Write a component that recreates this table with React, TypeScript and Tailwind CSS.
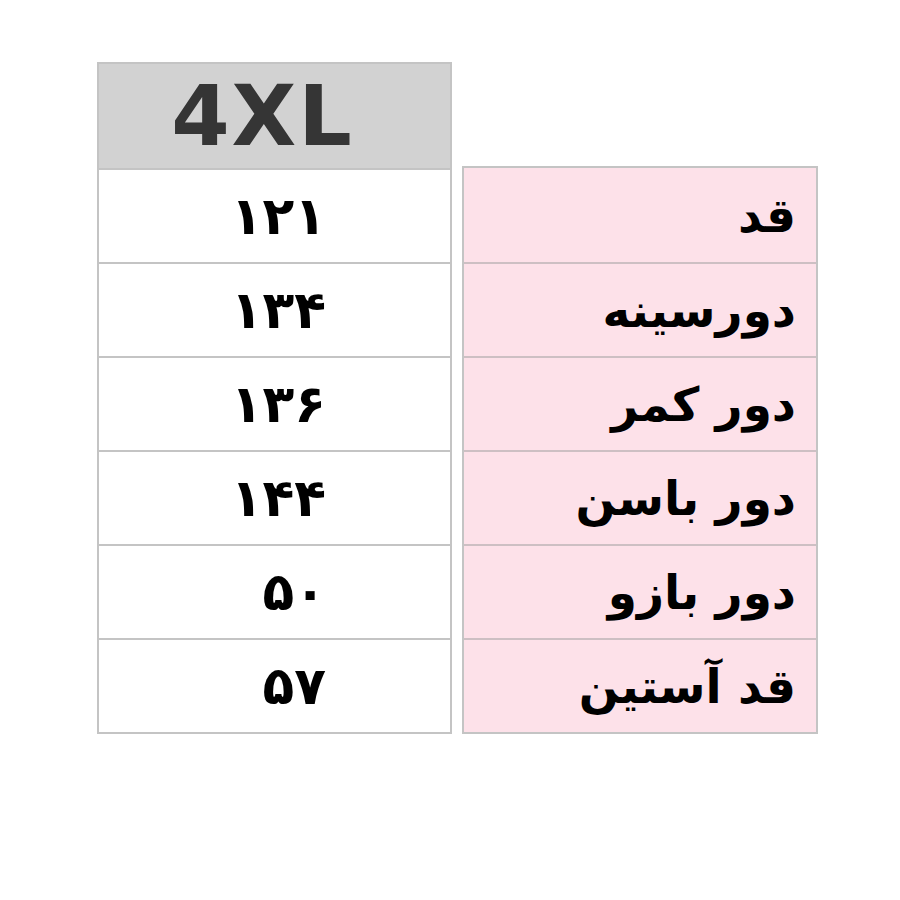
const rows: { label: string; value: string }[] = [
  { label: 'قد', value: '۱۲۱' },
  { label: 'دورسینه', value: '۱۳۴' },
  { label: 'دور کمر', value: '۱۳۶' },
  { label: 'دور باسن', value: '۱۴۴' },
  { label: 'دور بازو', value: '۵۰' },
  { label: 'قد آستین', value: '۵۷' },
];

const fa = { fontFamily: '"DejaVu Sans", sans-serif' };

export default function App(): React.ReactElement {
  return (
    <div className="flex h-[900px] w-[900px] items-start bg-white pl-[97px] pt-[62px]">
      {/* size column */}
      <div className="flex w-[355px] flex-col border-2 border-[#c4c4c4] bg-white">
        <div className="flex h-[104px] items-center justify-center bg-[#d2d2d2] pr-[24px]">
          <span
            className="text-[84px] font-bold leading-none tracking-[2px] text-[#353535]"
            style={fa}
          >
            4XL
          </span>
        </div>
        {rows.map((r) => (
          <div
            key={r.label}
            className="flex h-[94px] items-center justify-end border-t-2 border-[#c4c4c4] pr-[124px]"
          >
            <span className="text-[52px] font-bold leading-none tracking-[10px] text-black" style={fa}>
              {r.value}
            </span>
          </div>
        ))}
      </div>

      {/* label column */}
      <div className="ml-[10px] mt-[104px] flex w-[356px] flex-col border-2 border-[#c4c4c4] bg-[#fde1e9]">
        {rows.map((r, i) => (
          <div
            key={r.label}
            dir="rtl"
            className={`flex h-[94px] items-center pr-[20px] ${i > 0 ? 'border-t-2 border-[#cdbfc3]' : ''}`}
          >
            <span className="text-[47px] font-bold leading-none text-black" style={fa}>
              {r.label}
            </span>
          </div>
        ))}
      </div>
    </div>
  );
}
